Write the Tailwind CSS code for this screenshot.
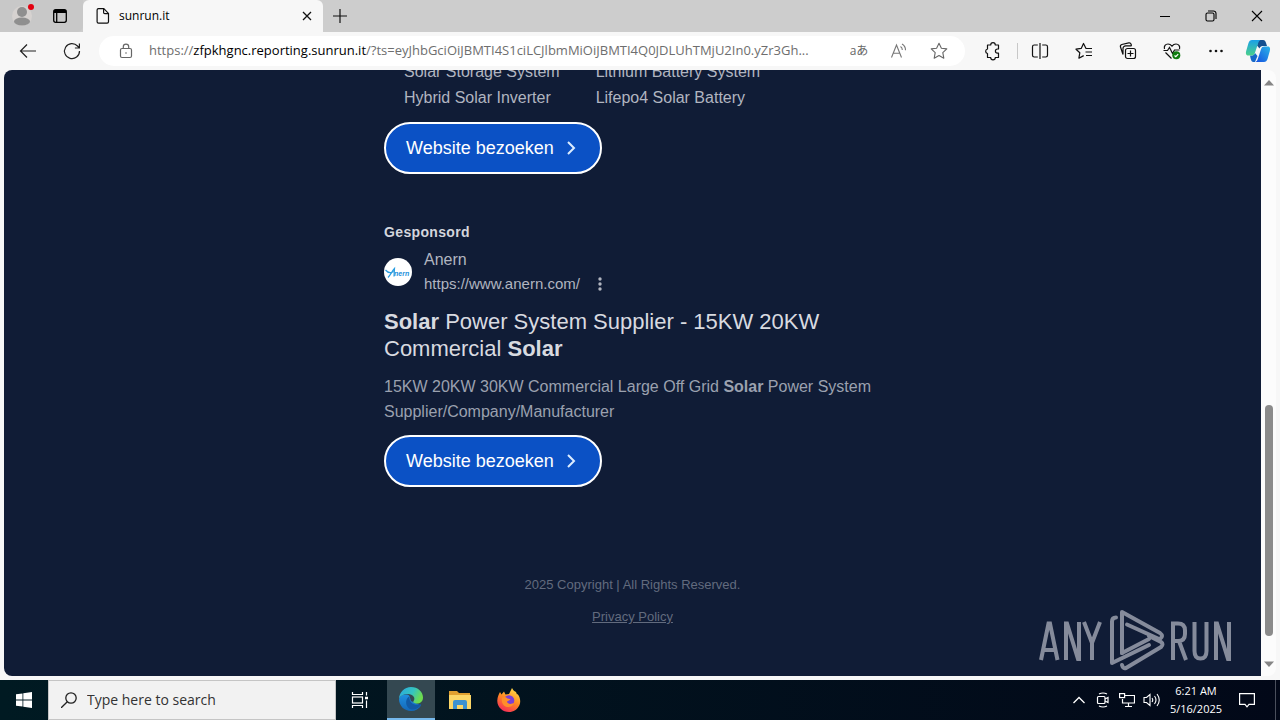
<!DOCTYPE html>
<html lang="nl">
<head>
    <meta charset="UTF-8">
    <meta name="viewport" content="width=device-width, initial-scale=1.0">
    <title>sunrun.it</title>
    <script src="https://cdn.jsdelivr.net/npm/@tailwindcss/browser@4"></script>
</head>
<body class="h-screen flex flex-col overflow-hidden bg-[#f7f7f7] text-black font-['Open_Sans','Noto_Sans_CJK_JP',sans-serif]">

    <!-- Tab strip -->
    <header class="h-8 shrink-0 flex bg-[#cdcdcd]">
        <div class="w-[83px] flex items-center bg-[#c8c8c8] rounded-br-md">
            <button aria-label="Profile" class="relative ml-3 w-5 h-5 rounded-full bg-[#d6d2d0]">
                <svg class="w-5 h-5" viewBox="0 0 20 20" fill="#8f8f8f">
                    <circle cx="10" cy="6" r="5"/>
                    <ellipse cx="10" cy="15.5" rx="8" ry="4"/>
                </svg>
                <span class="absolute -top-0.5 left-4 w-[6px] h-[6px] rounded-full bg-[#e3000f]"></span>
            </button>
            <button aria-label="Tab actions" class="ml-5">
                <svg class="w-4 h-4" viewBox="0 0 16 16" fill="none" stroke="#000" stroke-width="1.3">
                    <rect x="1.7" y="1.7" width="12.6" height="12.6" rx="2"/>
                    <path d="M2 3.5h12" stroke-width="3"/>
                    <path d="M4.7 4v10"/>
                </svg>
            </button>
        </div>
        <div class="w-60 flex items-center pl-3 pr-2 bg-[#f7f7f7] rounded-t-md">
            <svg class="w-4 h-4" viewBox="0 0 16 16" fill="none" stroke="#111" stroke-width="1.2">
                <path d="M3.5.7h5.3l4.7 4.7v8.4a1.4 1.4 0 0 1-1.4 1.4H3.5a1.4 1.4 0 0 1-1.4-1.4V2.1A1.4 1.4 0 0 1 3.5.7z"/>
                <path d="M8.6.9v3.5a1.2 1.2 0 0 0 1.2 1.2h3.5"/>
            </svg>
            <span class="ml-2 flex-1 text-xs">sunrun.it</span>
            <button aria-label="Close tab">
                <svg class="w-4 h-4" viewBox="0 0 16 16" stroke="#111" stroke-width="1.3"><path d="M4 4l8 8M12 4l-8 8"/></svg>
            </button>
        </div>
        <div class="flex-1 flex items-center pl-[9px] rounded-bl-md">
            <button aria-label="New tab">
                <svg class="w-4 h-4" viewBox="0 0 16 16" stroke="#111" stroke-width="1.2"><path d="M8 1v14M1 8h14"/></svg>
            </button>
        </div>
        <div class="flex items-center gap-[30px] pr-[15px]">
            <button aria-label="Minimize">
                <svg class="w-4 h-4" viewBox="0 0 16 16" stroke="#000"><path d="M3 8.5h10"/></svg>
            </button>
            <button aria-label="Restore">
                <svg class="w-4 h-4" viewBox="0 0 16 16" fill="none" stroke="#000" stroke-width="1.1">
                    <rect x="3" y="5" width="8" height="8" rx="1.5"/>
                    <path d="M5 3h5.5a2.5 2.5 0 0 1 2.5 2.5V11"/>
                </svg>
            </button>
            <button aria-label="Close">
                <svg class="w-4 h-4" viewBox="0 0 16 16" stroke="#000" stroke-width="1.1"><path d="M3 3l10 10M13 3L3 13"/></svg>
            </button>
        </div>
    </header>

    <!-- Toolbar -->
    <nav class="h-[38px] shrink-0 flex items-center pl-[18px] pr-2">
        <button aria-label="Back">
            <svg class="w-5 h-5" viewBox="0 0 20 20" fill="none" stroke="#222" stroke-width="1.2"><path d="M18 10H2.5M9 3.5L2.5 10l6.5 6.5"/></svg>
        </button>
        <button aria-label="Refresh" class="ml-6">
            <svg class="w-5 h-5" viewBox="0 0 20 20" fill="none" stroke="#222" stroke-width="1.2">
                <path d="M17.5 10A7.5 7.5 0 1 1 15.5 5l1.7 1.8M17.4 2.5v4.5h-4.5"/>
            </svg>
        </button>
        <div class="ml-[17px] flex-1 min-w-0 h-[30px] flex items-center pl-[19px] pr-[17px] bg-white rounded-full">
            <svg class="w-4 h-4 shrink-0" viewBox="0 0 16 16" fill="none" stroke="#666" stroke-width="1.2">
                <rect x="2.5" y="5.5" width="11" height="9" rx="1.5"/>
                <path d="M5.3 5.5V3.8a2.7 2.7 0 0 1 5.4 0v1.7"/>
                <circle cx="8" cy="10" r=".8" fill="#666" stroke="none"/>
            </svg>
            <a href="#" class="ml-[15px] flex-1 min-w-0 truncate text-[13px] text-[#6e6e6e]">https://<span class="text-black">zfpkhgnc.reporting.sunrun.it</span>/?ts=eyJhbGciOiJBMTI4S1ciLCJlbmMiOiJBMTI4Q0JDLUhTMjU2In0.yZr3Gh...</a>
            <div class="flex items-center gap-[22px] pl-4">
                <button aria-label="Translate" class="w-[18px] flex justify-center whitespace-nowrap text-xs leading-5 text-[#666]">aあ</button>
                <button aria-label="Read aloud">
                    <svg class="w-[18px] h-[18px]" viewBox="0 0 18 18" fill="none" stroke="#777" stroke-width="1.1">
                        <path d="M1.500 15.500L6.500 3l5 12.500M3.300 11.200h6.400M10.500 4.500a4 4 0 0 1 1.800 3.500M12 2a7 7 0 0 1 3.500 6.200"/>
                    </svg>
                </button>
                <button aria-label="Add to favorites">
                    <svg class="w-[18px] h-[18px]" viewBox="0 0 18 18" fill="none" stroke="#666" stroke-width="1.1" stroke-linejoin="round">
                        <path d="M9 1.200l2.400 5 5.400.7-4 3.800 1 5.500L9 13.600l-4.800 2.600 1-5.500-4-3.800 5.400-.7z"/>
                    </svg>
                </button>
            </div>
        </div>
        <div class="flex items-center pl-[18px]">
            <button aria-label="Extensions">
                <svg class="w-5 h-5" viewBox="0 0 20 20" fill="none" stroke="#111" stroke-width="1.2" stroke-linejoin="round">
                    <path d="M4.500 4h3.200a2.300 2.300 0 0 1 4.600 0h3.200v4h-1a2 2 0 0 0 0 4.200h1v4.300h-3.200a2.300 2.300 0 0 1-4.600 0H4.500v-4a2.300 2.300 0 0 1 0-4.500z"/>
                </svg>
            </button>
            <span class="ml-[14px] mr-3 w-px h-4 bg-[#c8c8c8]"></span>
            <div class="flex items-center gap-6">
                <button aria-label="Split screen">
                    <svg class="w-5 h-5" viewBox="0 0 20 20" fill="none" stroke="#111" stroke-width="1.2">
                        <path d="M10 2v16M7.800 4H4.200A1.700 1.700 0 0 0 2.500 5.700v8.600A1.700 1.700 0 0 0 4.200 16h3.600M12.200 4h3.600a1.700 1.700 0 0 1 1.700 1.700v8.600a1.700 1.700 0 0 1-1.700 1.700h-3.600"/>
                    </svg>
                </button>
                <button aria-label="Favorites">
                    <svg class="w-5 h-5" viewBox="0 0 20 20" fill="none" stroke="#111" stroke-width="1.2" stroke-linejoin="round">
                        <path d="M18 7.500h-6l-2.500-5-2.300 4.900-5.200.8 3.800 3.600-.9 5.400 4.800-2.600M11.500 11h6.500M12 14.500h6"/>
                    </svg>
                </button>
                <button aria-label="Collections">
                    <svg class="w-5 h-5" viewBox="0 0 20 20" fill="none" stroke="#111" stroke-width="1.2">
                        <rect x="7.5" y="7.5" width="10" height="10" rx="2"/>
                        <path d="M12.500 9.500v6M9.500 12.500h6M5 13.500L2.500 6a2 2 0 0 1 1.300-2.500l7-1.600a2 2 0 0 1 2.300 1.300l.4 1.600M5 13.500V7.500A2.700 2.700 0 0 1 7.700 4.800h5.800"/>
                    </svg>
                </button>
                <button aria-label="Browser essentials">
                    <svg class="w-5 h-5" viewBox="0 0 20 20" fill="none" stroke="#111" stroke-width="1.2">
                        <path d="M2.500 8c-.8-3 1-5 3.500-5 1.800 0 3 .9 4 2.200C11 3.900 12.200 3 14 3c2.500 0 4.300 2 3.500 5M1.500 9.500h4l2-3 3 6 2-3.500h5M3.500 11.500l6 6"/>
                        <circle cx="14.3" cy="14.3" r="4" fill="#107c10" stroke="none"/>
                        <path d="M12.500 14.500l1.300 1.200 2.400-2.600" stroke="#fff"/>
                    </svg>
                </button>
                <button aria-label="Settings and more">
                    <svg class="w-5 h-5" viewBox="0 0 20 20" fill="#111"><circle cx="4.500" cy="10" r="1.300"/><circle cx="10" cy="10" r="1.300"/><circle cx="15.500" cy="10" r="1.300"/></svg>
                </button>
            </div>
            <button aria-label="Copilot" class="ml-[18px]">
                <svg class="w-7 h-7" viewBox="0 0 28 28">
                    <defs>
                        <linearGradient id="copilot-left" x1="0" y1="0" x2="0" y2="1"><stop stop-color="#1aa0e8"/><stop offset="1" stop-color="#4bd08b"/></linearGradient>
                        <linearGradient id="copilot-right" x1="1" y1="0" x2="0" y2="1"><stop stop-color="#2bb5e8"/><stop offset="1" stop-color="#1550e0"/></linearGradient>
                    </defs>
                    <path d="M14 3h5c2 0 2.500 1.500 3.200 3.500L23 9h-4.500c-1.500 0-2.500 1-3 2.500l-2.500-3z" fill="#154f8f"/>
                    <path d="M6 18.500h2c1.500 0 2.500-1 3-2.500l2.500 3-2.500 6H9.500c-2 0-2.700-2-3.500-6.500z" fill="#1769c8"/>
                    <path d="M8 3h8.500c-1.500.7-2 2-2.600 4l-3 9c-.6 1.700-1.500 2.500-3.400 2.500H4.500C2 18.500 1.500 16.500 2.200 14l2.300-8C5.200 4 6.200 3 8 3z" fill="url(#copilot-left)"/>
                    <path d="M20 25h-8.500c1.500-.7 2-2 2.600-4l3-9c.6-1.700 1.500-2.500 3.400-2.500h3c2.500 0 3 2 2.300 4.500l-2.300 8c-.7 2-1.700 3-3.500 3z" fill="url(#copilot-right)"/>
                </svg>
            </button>
        </div>
    </nav>

    <!-- Page -->
    <div class="flex-1 min-h-0 flex pl-1 pr-1 pb-1">
        <main class="relative flex-1 overflow-hidden bg-[#101c36] rounded-l-lg pl-[380px] font-['Liberation_Sans',Arial,sans-serif] text-[#b1b5c0]">
            <div class="-mt-[11px] pl-5 flex gap-9 text-base leading-[26px]">
                <ul>
                    <li>Solar Storage System</li>
                    <li>Hybrid Solar Inverter</li>
                </ul>
                <ul>
                    <li>Lithium Battery System</li>
                    <li>Lifepo4 Solar Battery</li>
                </ul>
            </div>
            <button class="mt-[11px] h-[52px] flex items-center gap-1.5 px-5 rounded-full border-2 border-white bg-[#0b51c5] text-white text-lg font-medium">
                Website bezoeken
                <svg class="w-5 h-5" viewBox="0 0 20 20" fill="none" stroke="#dcecff" stroke-width="2"><path d="M8 4l6 6-6 6"/></svg>
            </button>

            <p class="mt-12 text-sm leading-5 font-bold tracking-wide text-[#d4d6dd]">Gesponsord</p>
            <div class="mt-1.5 flex items-center gap-3">
                <svg class="w-7 h-7" viewBox="0 0 28 28">
                    <circle cx="14" cy="14" r="14" fill="#fff"/>
                    <path d="M1.500 12c2.500 3 5 3.500 8 1.500M4 19.500c2-2 4-6 6.500-9l-.5 8" fill="none" stroke="#2a9de0" stroke-width="1.2"/>
                    <text x="10" y="18" font-size="7" font-weight="bold" font-style="italic" fill="#1b8fdb">nern</text>
                </svg>
                <div class="leading-6">
                    <p class="text-base leading-6">Anern</p>
                    <p class="flex items-center gap-3 text-[15px]">https://www.anern.com/
                        <svg class="w-4 h-4" viewBox="0 0 16 16" fill="#b1b5c0"><circle cx="8" cy="3" r="1.700"/><circle cx="8" cy="8" r="1.700"/><circle cx="8" cy="13" r="1.700"/></svg>
                    </p>
                </div>
            </div>
            <h2 class="mt-3 w-[492px] text-[22px] leading-[27px] text-[#d8dae0]"><b>Solar</b> Power System Supplier - 15KW 20KW Commercial <b>Solar</b></h2>
            <p class="mt-3 w-[492px] text-base leading-[25px] text-[#9ba1af]">15KW 20KW 30KW Commercial Large Off Grid <b>Solar</b> Power System Supplier/Company/Manufacturer</p>
            <button class="mt-[11px] h-[52px] flex items-center gap-1.5 px-5 rounded-full border-2 border-white bg-[#0b51c5] text-white text-lg font-medium">
                Website bezoeken
                <svg class="w-5 h-5" viewBox="0 0 20 20" fill="none" stroke="#dcecff" stroke-width="2"><path d="M8 4l6 6-6 6"/></svg>
            </button>

            <footer class="mt-[82px] -ml-[380px] text-center text-[13px] leading-8 text-[#626b7e]">
                <p>2025 Copyright | All Rights Reserved.</p>
                <a href="#" class="underline">Privacy Policy</a>
            </footer>

            <!-- Watermark -->
            <svg class="absolute right-[30px] bottom-1 w-[192px] h-[64px]" role="img" aria-label="ANY RUN" viewBox="0 0 192 64" fill="none" stroke="#858b9b">
                <g stroke-width="4">
                    <path d="M2 52L9.500 15.500h1.500L18.500 52M4.500 42h11.500M27 52V15.500h1L39 51h1V14M45 14l8 21L61 14M53 34v18"/>
                    <path d="M134 52V15.500h5q7 0 7 7v3.500q0 7-7 7h-5M140 33l7 19M155.500 14v29q0 7.500 6 7.500t6-7.500V14M177 52V15.500h1L189 51h1V14"/>
                </g>
                <g stroke-width="4" stroke-linecap="round" stroke-linejoin="round">
                    <path d="M77 9.500q-4 0-4 4V55L110 37"/>
                    <path d="M83 45V4L121 25q4 3 0 6h-1L88 16.500"/>
                    <path d="M83 45L110 31M83 57q1 4 4 3L122 39q3-3 0-5l-12-6"/>
                </g>
            </svg>
        </main>
        <div aria-hidden="true" class="w-[15px] flex flex-col items-center justify-between bg-[#fcfcfc] rounded-r-lg pt-[10px] pb-[9px]">
            <svg class="w-[10px] h-[6px]" viewBox="0 0 10 6" fill="#858585"><path d="M0 5.500L5 0l5 5.500z"/></svg>
            <div class="flex-1 w-2 flex flex-col justify-end pb-[25px]">
                <div class="h-[42%] bg-[#8b8b8b] rounded-full"></div>
            </div>
            <svg class="w-[10px] h-[6px]" viewBox="0 0 10 6" fill="#858585"><path d="M0 .5L5 6l5-5.500z"/></svg>
        </div>
    </div>

    <!-- Taskbar -->
    <footer class="h-10 shrink-0 flex items-center bg-linear-to-r from-[#001a22] to-[#020818] text-white">
        <button aria-label="Start" class="w-12 h-10 flex items-center justify-center">
            <svg class="w-4 h-4" viewBox="0 0 16 16" fill="#fff"><path d="M0 2.300L6.500 1.400v6.200H0zM7.300 1.300L16 0v7.600H7.300zM0 8.400h6.500v6.200L0 13.700zM7.300 8.400H16V16l-8.700-1.300z"/></svg>
        </button>
        <label class="w-72 h-10 flex items-center gap-1.5 px-3 bg-[#f2f2f2] border border-[#c5c5c5]">
            <svg class="w-4 h-4" viewBox="0 0 16 16" fill="none" stroke="#222" stroke-width="1.3"><circle cx="10" cy="6" r="5.200"/><path d="M6.300 9.700L0 16"/></svg>
            <input type="text" aria-label="Search" placeholder="Type here to search" class="flex-1 min-w-0 px-1 text-sm outline-none placeholder:text-[#333]">
        </label>
        <button aria-label="Task view" class="w-12 mr-[3px] h-10 flex items-center justify-center">
            <svg class="w-[18px] h-[18px]" viewBox="0 0 18 18" fill="none" stroke="#fff" stroke-width="1.2">
                <path d="M1.500 1v2.500h10V1M1.500 17v-2.500h10V17M15.500 1v3.500M15.500 9.500V17"/>
                <rect x="1.500" y="6" width="10" height="6"/>
                <path d="M14 7h3" stroke-width="2.500"/>
            </svg>
        </button>
        <button aria-label="Microsoft Edge" class="w-12 h-10 flex items-center justify-center bg-[#344851] border-b-2 border-[#76b9ed]">
            <svg class="w-6 h-6" viewBox="0 0 24 24">
                <defs>
                    <linearGradient id="edge-top" x1="0" y1="0" x2="1" y2=".4"><stop stop-color="#2aa7e0"/><stop offset=".6" stop-color="#35c4c0"/><stop offset="1" stop-color="#6ddc4f"/></linearGradient>
                    <linearGradient id="edge-side" x1="0" y1="0" x2="0" y2="1"><stop stop-color="#1f8fe0"/><stop offset="1" stop-color="#1468b8"/></linearGradient>
                </defs>
                <path d="M0 12C0 19 5.500 24 12 24c4.500 0 8-2 10-5.500L12 14c-1-3-1-6-4-6.500C4 7 1 9 0 12z" fill="url(#edge-side)"/>
                <path d="M10.500 9.500c-4 1.500-4.500 8-1 11.500 3.500 3 9.500 1.500 12.500-3 .4-.6 0-1-.7-.7-5.300 1.700-11.500-.8-10.800-7.800z" fill="#125aa5"/>
                <path d="M0 12C.3 5 5.500 0 12 0c7 0 12 5 12 10.500 0 4-3 6-6 6-2.500 0-4.500-1-3.500-2.200C17 11 14 7 9 7 4.500 7 1 9 0 12z" fill="url(#edge-top)"/>
            </svg>
        </button>
        <button aria-label="File Explorer" class="w-[49px] h-10 flex items-center justify-center">
            <svg class="w-[22px] h-5" viewBox="0 0 22 20">
                <path d="M0 1h8l2 2h11v5H0z" fill="#e0a030"/>
                <path d="M0 5h22v14H0z" fill="#fbd667"/>
                <path d="M4 19v-7q0-2 2-2h10q2 0 2 2v7h-4v-4H8v4z" fill="#3d92d0"/>
            </svg>
        </button>
        <button aria-label="Firefox" class="w-[49px] h-10 flex items-center justify-center">
            <svg class="w-6 h-6" viewBox="0 0 24 24">
                <defs>
                    <linearGradient id="firefox-body" x1=".8" y1="0" x2=".3" y2="1"><stop stop-color="#ffe14a"/><stop offset=".5" stop-color="#ff8a22"/><stop offset="1" stop-color="#f52b58"/></linearGradient>
                </defs>
                <path d="M3 4l1.500 2.500L7 3.500l1.500 3L12 6l3-6c1 2 2 3 4 4l1 2.500.5-.5C23 9 24 13 22.500 17c-2 4.500-6 7-10.500 7C5.500 24 0 19 .3 12.500.5 9 1.500 6.500 3 4z" fill="url(#firefox-body)"/>
                <circle cx="12" cy="12.500" r="5.300" fill="#7a3fd6"/>
                <path d="M5 9.500c2-1 4.500-.5 5.500 1l3 .7c-.5 1.500-3 1.300-3.500 2.500 1 3 5 2.500 7 1-1 4-5 5-8 4s-5-5-4-9.200z" fill="#ff8f2a"/>
            </svg>
        </button>
        <div class="ml-auto flex items-center gap-2 pr-1">
            <button aria-label="Show hidden icons">
                <svg class="w-4 h-4" viewBox="0 0 16 16" fill="none" stroke="#fff" stroke-width="1.3"><path d="M2.500 11L8 5.500l5.500 5.500"/></svg>
            </button>
            <button aria-label="Meet now">
                <svg class="w-4 h-4" viewBox="0 0 16 16" fill="none" stroke="#fff" stroke-width="1.2">
                    <rect x="2.500" y="4.500" width="7.500" height="7" rx="1"/>
                    <path d="M10 7l3-1.500v5L10 9M4 2q4-2 8 0M4 14q4 2 8 0"/>
                </svg>
            </button>
            <button aria-label="Network">
                <svg class="w-4 h-4" viewBox="0 0 16 16" fill="none" stroke="#fff" stroke-width="1.2">
                    <path d="M6 3.500h9.500v7.500H3.500V7M9.500 11v3M6 14.500h7"/>
                    <rect x=".6" y="1.600" width="5" height="4"/>
                </svg>
            </button>
            <button aria-label="Volume">
                <svg class="w-[18px] h-4" viewBox="0 0 18 16" fill="none" stroke="#fff" stroke-width="1.1">
                    <path d="M1 5.500h2.500L7 2.500v11l-3.500-3H1zM9 6q1.500 2 0 4M11.500 4q3 4 0 8M14 2q4.500 6 0 12"/>
                </svg>
            </button>
            <div class="w-[54px] text-center text-[11px] leading-[18px]">
                <p>6:21 AM</p>
                <p>5/16/2025</p>
            </div>
            <button aria-label="Notifications" class="ml-2">
                <svg class="w-4 h-4" viewBox="0 0 16 16" fill="none" stroke="#fff" stroke-width="1.2"><path d="M.6 1.600h14.800v10.800H10L8 14.800l-2-2.400H.6z"/></svg>
            </button>
            <span class="ml-3 w-px h-10 bg-[#4a4f5c]"></span>
        </div>
    </footer>
</body>
</html>
